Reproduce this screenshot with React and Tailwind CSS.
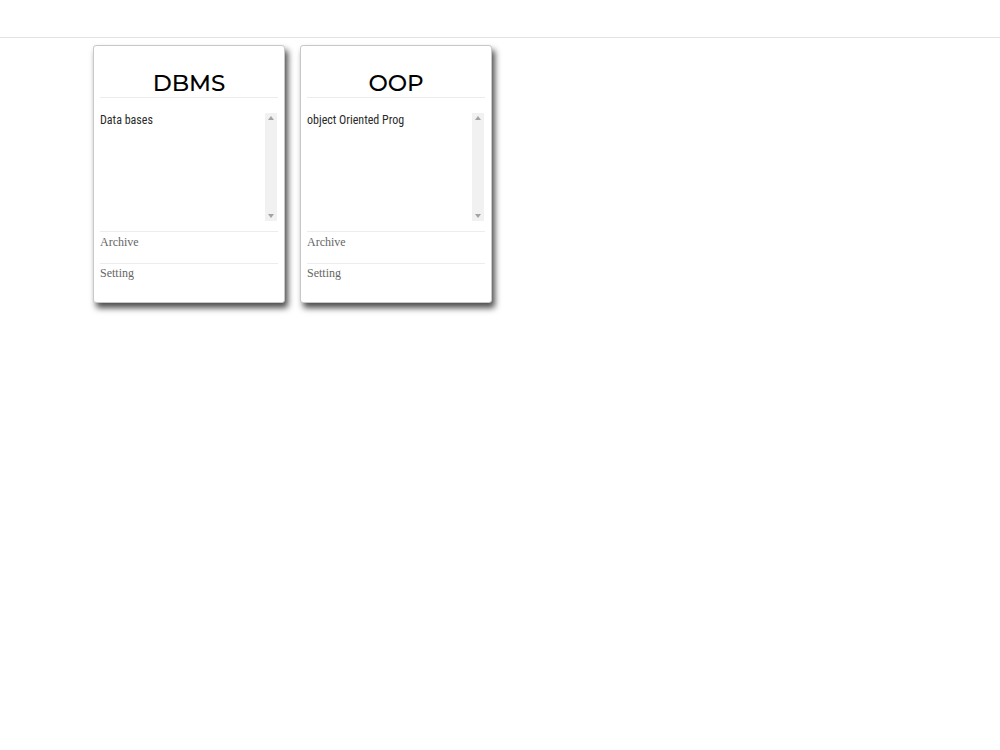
import React from "react";

function Card({ title, body }) {
  return (
    <div className="w-[192px] h-[258px] bg-white border border-[#c8c8c8] rounded-[3px] shadow-[3px_5px_6px_rgba(0,0,0,0.7)] px-[6px] flex flex-col">
      <div className="pt-[23px] h-[52px] border-b border-[#ececec] text-center text-[23px] leading-[28px] font-medium text-black font-['Montserrat','Noto_Sans',sans-serif]">
        {title}
      </div>
      <div className="mt-[15px] h-[108px] flex">
        <div className="flex-1 text-[12px] leading-[14px] text-[#2a2a2a] font-['Roboto_Condensed','Roboto',sans-serif] [font-stretch:condensed]">
          {body}
        </div>
        <div className="w-[12px] mr-[1px] bg-[#f1f1f1] flex flex-col justify-between items-center py-[3px]">
          <svg width="6" height="4" viewBox="0 0 6 4"><path d="M3 0L6 4H0Z" fill="#a3a3a3" /></svg>
          <svg width="6" height="4" viewBox="0 0 6 4"><path d="M0 0H6L3 4Z" fill="#a3a3a3" /></svg>
        </div>
      </div>
      <div className="mt-[10px] border-t border-[#ececec] h-[32px] pt-[3px] text-[12px] leading-[14px] text-[#666] font-['Liberation_Serif',serif]">
        Archive
      </div>
      <div className="border-t border-[#ececec] pt-[2px] text-[12px] leading-[14px] text-[#666] font-['Liberation_Serif',serif]">
        Setting
      </div>
    </div>
  );
}

export default function App() {
  return (
    <div className="min-h-[750px] bg-white">
      <div className="h-[38px] border-b border-[#e3e3e3]" />
      <div className="pl-[93px] pt-[7px] flex gap-[15px]">
        <Card title="DBMS" body="Data bases" />
        <Card title="OOP" body="object Oriented Prog" />
      </div>
    </div>
  );
}
